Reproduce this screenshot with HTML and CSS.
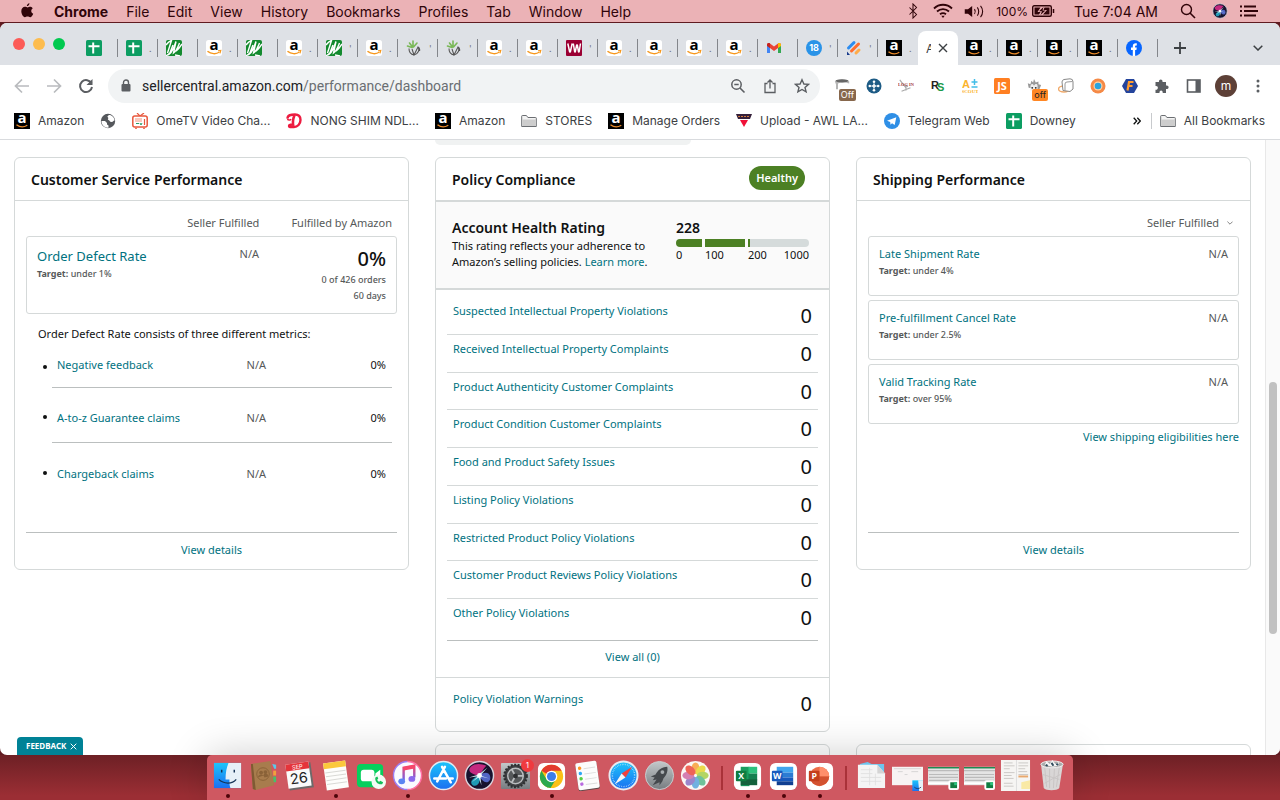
FILE: index.html
```html
<!DOCTYPE html>
<html lang="en">
<head>
    <meta charset="UTF-8">
    <meta name="viewport" content="width=device-width, initial-scale=1.0">
    <title>Account Health</title>
    <link rel="stylesheet" href="styles.css">
</head>
<body>
    <!-- Gradients shared by the dock icons -->
    <svg class="gradients" aria-hidden="true">
        <linearGradient id="g-blue" x1="0" y1="0" x2="0" y2="1"><stop offset="0" stop-color="#1cc5fb"/><stop offset="1" stop-color="#1b6ff0"/></linearGradient>
        <linearGradient id="g-note" x1="0" y1="0" x2="0" y2="1"><stop offset="0" stop-color="#f6466a"/><stop offset="1" stop-color="#6d63ee"/></linearGradient>
        <linearGradient id="g-grey" x1="0" y1="0" x2="0" y2="1"><stop offset="0" stop-color="#c3c8ca"/><stop offset="1" stop-color="#777c80"/></linearGradient>
    </svg>

    <!-- Icon sprite -->
    <svg class="sprite" aria-hidden="true">
        <symbol id="i-sheets" viewBox="0 0 16 16"><rect width="16" height="16" rx="1.5" fill="#0c9d62"/><path d="M2.5 6.2h11M7.2 2.6v11" stroke="#fff" stroke-width="2"/></symbol>
        <symbol id="i-n" viewBox="0 0 16 16"><rect width="16" height="16" rx="2" fill="#138a2e"/><path d="M0 5c2-3 3.500-4 5.500-4.500L1.500 13M7 5L3.500 14c3-2 5-8 6.500-12.500L7.500 13c3-2 4-5 6-10M10 11c2-1 4-4 6-7M0 16l4-3M9 15l5 1" stroke="#fff" stroke-width="1.400" fill="none"/></symbol>
        <symbol id="i-amz" viewBox="0 0 16 16"><rect width="16" height="16" rx="2.5" fill="#fff"/><text x="8" y="10" text-anchor="middle" class="amz-letter" fill="#000">a</text><path d="M1.5 11.2c3.500 3 8.600 3.200 12 .8" fill="none" stroke="#f7981d" stroke-width="1.500"/><path d="M12 10.800l2.800-.3-.8 2.800" fill="none" stroke="#f7981d" stroke-width="1.100"/></symbol>
        <symbol id="i-amzblk" viewBox="0 0 16 16"><rect width="16" height="16" fill="#000"/><text x="8" y="10" text-anchor="middle" class="amz-letter" fill="#fff">a</text><path d="M2.500 11.700c3.200 2.600 7.500 2.700 10.800.6" fill="none" stroke="#e8892a" stroke-width="1.300"/></symbol>
        <symbol id="i-plant" viewBox="0 0 16 16"><path d="M6.500 7L3.500 3M7 6V1M7.500 7L11 3M6 7.500L1.500 6" stroke="#79b857" stroke-width="1.600" fill="none" stroke-linecap="round"/><path d="M3 8.500c0 3.500 2 6 5 6.500M6 9l2 6 4-8c2 3 0 7-4 8M12 7c2 1 2 2 1.500 4" stroke="#555" stroke-width="1.100" fill="none"/></symbol>
        <symbol id="i-vw" viewBox="0 0 16 16"><rect width="16" height="16" rx="1" fill="#9b0033"/><path d="M1.800 3.500l1.900 8.500h.6l1.900-8.500M7.300 3.500L8.700 12h.5l1.500-7h.6l1.300 7h.5l1.400-8.500" stroke="#fff" stroke-width="1.500" stroke-linejoin="bevel" fill="none"/></symbol>
        <symbol id="i-gmail" viewBox="0 0 16 16"><path d="M1 4v9h3V7z" fill="#4285f4"/><path d="M15 4v9h-3V7z" fill="#34a853"/><path d="M1 5c0-2 2-2.500 3-1.500L8 6.600l4-3.100c1-1 3-.5 3 1.500l-3 3-4 3-4-3z" fill="#ea4335"/><path d="M12 3.500c1-1 3-.5 3 1.500v1l-3 2z" fill="#fbbc04"/><path d="M1 5c0-2 2-2.500 3-1.500V8L1 6z" fill="#c5221f"/></symbol>
        <symbol id="i-18" viewBox="0 0 16 16"><circle cx="8" cy="8" r="8" fill="#2a93e8"/><text x="8" y="11.300" text-anchor="middle" class="count-letter" fill="#fff">18</text></symbol>
        <symbol id="i-pencil" viewBox="0 0 16 16"><path d="M2.500 8l5.500-5.500" stroke="#2d8cf0" stroke-width="3" stroke-linecap="round"/><path d="M5.500 11l7-7" stroke="#ff6d2e" stroke-width="3" stroke-linecap="round"/><path d="M10 13l3-3" stroke="#ffab4a" stroke-width="3" stroke-linecap="round"/><path d="M1 11.500l3 3.500H1z" fill="#173a8c"/></symbol>
        <symbol id="i-fb" viewBox="0 0 16 16"><circle cx="8" cy="8" r="8" fill="#0866ff"/><path d="M6.800 16V10H5V7.600h1.800V6.200c0-2.300 1.200-3.200 4-2.900v2.100c-1.300-.1-1.700.1-1.700 1v1.200h1.700L10.400 10H9.100v6z" fill="#fff"/></symbol>
        <symbol id="i-globe" viewBox="0 0 16 16"><circle cx="8" cy="8" r="7.200" fill="#55585c"/><path d="M1.500 8h3.500l2 2v1.500l1.500 1v2.200C4.500 15 1.500 12 1.500 8zM9 2c-1.500 1-2 1.500-1 2.500s-1 2 .5 2.500 1 2 3 2 1.500-1.500 3-1.500C14.500 4.500 12 2 9 2z" fill="#fff"/></symbol>
        <symbol id="i-tv" viewBox="0 0 16 16"><path d="M5 0l3 3 4-3" stroke="#e8573c" stroke-width="1.200" fill="none"/><rect x=".8" y="3" width="14.400" height="11" rx="2" fill="#fff" stroke="#e8573c" stroke-width="1.500"/><path d="M3 6h7M3 8h7" stroke="#f4937f" stroke-width="1.200"/><path d="M4 10.500h3M8 10l1 2 1-2" stroke="#2a9d6a" stroke-width="1" fill="none"/><path d="M12.500 6v6" stroke="#e8573c" stroke-width="1.200"/><path d="M3 15.300h2M11 15.300h2" stroke="#e8573c"/></symbol>
        <symbol id="i-d" viewBox="0 0 16 16"><path d="M1.500 5.500C1.500 2 5 1.500 9 1.500c4.500 0 5.500 3 5.500 5.500 0 4-3 7-6.500 7-2.500 0-5 .5-5-1s3-1.500 3.500-1" fill="none" stroke="#ed1c40" stroke-width="2.400"/><path d="M8.500 2c-1.500 4-2.500 7-1 11" fill="none" stroke="#ed1c40" stroke-width="2.600"/><path d="M1.500 5.500c0 2 3 2 3.500.5" fill="none" stroke="#ed1c40" stroke-width="1.500"/></symbol>
        <symbol id="i-folder" viewBox="0 0 16 16"><path d="M.7 13.500V3.200q0-.7.700-.7h4l1.500 2h7.700q.7 0 .7.700v8.300z" fill="#f3f3f3" stroke="#6b6e72"/><path d="M1.200 6.500h13.600V13H1.200z" fill="#cdcdcd"/></symbol>
        <symbol id="i-upload" viewBox="0 0 16 16"><path d="M0 1h16l-2 5H2z" fill="#35203a"/><path d="M2 3.500h12" stroke="#d07a3c" stroke-dasharray="2 1"/><path d="M4 7h8l-4 7z" fill="#f01038"/></symbol>
        <symbol id="i-telegram" viewBox="0 0 16 16"><circle cx="8" cy="8" r="8" fill="#2f8fe6"/><path d="M3 7.800l9.300-3.600L10.700 12 8 10.200l-1.500 1.500L6.200 9z" fill="#fff"/></symbol>
        <symbol id="i-apple" viewBox="0 0 16 18"><path d="M10.800 0c.1 1.700-1.300 3.400-3 3.400C7.700 1.800 9.200.2 10.800 0zM14.500 6c-2.500 1.600-2 5 .6 6-.6 1.700-2 4-3.500 4-1.200 0-1.600-.7-3-.7s-1.900.7-3 .7C3.500 16 1.500 12.500 1.500 9.300 1.500 6 3.500 4.200 5.600 4.200c1.300 0 2.200.8 3.100.8s2-.9 3.500-.8c1 .1 1.800.6 2.300 1.800z" fill="currentColor"/></symbol>
        <symbol id="i-bluetooth" viewBox="0 0 16 18"><path d="M4 5l8 8-4 4V1l4 4-8 8" fill="none" stroke="currentColor" stroke-width="1.200"/></symbol>
        <symbol id="i-wifi" viewBox="0 0 20 16"><path d="M1 5.500c5-5 13-5 18 0M4 8.500c3.500-3.300 8.500-3.300 12 0M7 11.300c2-1.600 4-1.600 6 0" fill="none" stroke="currentColor" stroke-width="1.800"/><path d="M8.300 12.800h3.400L10 15z" fill="currentColor"/></symbol>
        <symbol id="i-volume" viewBox="0 0 21 14"><path d="M0 4.500h3.500L8 1v12L3.500 9.500H0z" fill="currentColor"/><path d="M10.500 4.500c1 1.500 1 3.500 0 5M13.500 2.500c2 2.500 2 6.500 0 9M17 1c3 3.500 3 8.500 0 12" fill="none" stroke="currentColor" stroke-width="1.200"/></symbol>
        <symbol id="i-battery" viewBox="0 0 23 12"><rect x=".7" y=".7" width="18.600" height="10.600" rx="1.500" fill="none" stroke="currentColor" stroke-width="1.400"/><path d="M2.500 2.500h6L5.500 7h3l-1.500 2.500H2.500zM12.500 2.500h5v7H11l4-4.500h-3.500z" fill="currentColor"/><path d="M11.500 2L7 6.300h3L8.500 10l5-4.500h-3z" fill="currentColor"/><path d="M21.500 4v4" stroke="currentColor" stroke-width="1.500"/></symbol>
        <symbol id="i-search" viewBox="0 0 16 16"><circle cx="6.500" cy="6.500" r="5" fill="none" stroke="currentColor" stroke-width="1.400"/><path d="M10 10l5 5" stroke="currentColor" stroke-width="1.600"/></symbol>
        <symbol id="i-siri" viewBox="0 0 32 32"><circle cx="16" cy="16" r="14.500" fill="#17132e" stroke="#d9d3dd" stroke-width="1.500"/><path d="M16 16C7 15 3 11 7 7c5-4 11-3 16-1-3 3-5 7-7 10z" fill="#c42a80"/><path d="M16 16C9 18 5 23 9 26c5 3 9-5 7-10z" fill="#1e9ab5"/><path d="M16 16c8-6 12-1 11 4-3 6-9 2-11-4z" fill="#5266c4"/><path d="M5 18l10-3 9-7-7 8 9 3-9-2 1 9-3-8-7 5 6-6z" fill="#dffaff" opacity=".85"/><circle cx="16" cy="16" r="2.500" fill="#fff"/></symbol>
        <symbol id="i-list" viewBox="0 0 18 12"><path d="M0 1.500h2M0 6h2M0 10.500h2M4 1.500h12M4 6h14M4 10.500h12" stroke="currentColor" stroke-width="2"/></symbol>
        <symbol id="i-back" viewBox="0 0 16 16"><path d="M15 8H2M8 1.500L1.500 8 8 14.500" fill="none" stroke="currentColor" stroke-width="1.700"/></symbol>
        <symbol id="i-forward" viewBox="0 0 16 16"><path d="M1 8h13M8 1.500L14.500 8 8 14.500" fill="none" stroke="currentColor" stroke-width="1.700"/></symbol>
        <symbol id="i-reload" viewBox="0 0 16 16"><path d="M13.500 5.500A6 6 0 1 0 14 9" fill="none" stroke="currentColor" stroke-width="2"/><path d="M14.500 1v6h-6z" fill="currentColor"/></symbol>
        <symbol id="i-lock" viewBox="0 0 12 14"><rect x="1.500" y="5" width="9" height="7.500" rx="1" fill="currentColor"/><path d="M3.500 6V3.500a2.500 2.500 0 0 1 5 0V6" fill="none" stroke="currentColor" stroke-width="1.400"/></symbol>
        <symbol id="i-zoomout" viewBox="0 0 16 16"><circle cx="6.500" cy="6.500" r="4.700" fill="none" stroke="currentColor" stroke-width="1.500"/><path d="M4.300 6.500h4.400M10 10l4.500 4.500" stroke="currentColor" stroke-width="1.600"/></symbol>
        <symbol id="i-share" viewBox="0 0 16 16"><path d="M5.500 5.500h-2.500v9h10v-9h-2.500M8 10.500V2M5.500 4.500L8 2l2.500 2.500" fill="none" stroke="currentColor" stroke-width="1.300"/></symbol>
        <symbol id="i-star" viewBox="0 0 16 16"><path d="M8 1.800l1.900 4.200 4.600.4-3.500 3 1.100 4.500L8 11.500l-4.100 2.400L5 9.400l-3.500-3 4.600-.4z" fill="none" stroke="currentColor" stroke-width="1.400"/></symbol>
        <symbol id="i-hat" viewBox="0 0 20 20"><path d="M1 4c3-3 15-3 18 0v3c-3-2-12-2-14 0v7H2.500V8z" fill="#b5b5b5"/><ellipse cx="10" cy="3.500" rx="8" ry="2" fill="#666"/></symbol>
        <symbol id="i-ship" viewBox="0 0 16 16"><circle cx="8" cy="8" r="7.500" fill="#1d5b85"/><path d="M5.500 8h5M8 5.500v5" stroke="#fff" stroke-width="1.500"/><g fill="#fff"><circle cx="8" cy="3.800" r="1.300"/><circle cx="8" cy="12.200" r="1.300"/><circle cx="3.800" cy="8" r="1.300"/><circle cx="12.200" cy="8" r="1.300"/></g></symbol>
        <symbol id="i-login" viewBox="0 0 18 16"><path d="M2 1l7 9M9 7l2 2M4 14l10-4M9 7v6" stroke="#aaa" stroke-width="1.300"/><text x="9" y="8.500" text-anchor="middle" class="login-letter" fill="#a63a3a">LOG IN</text></symbol>
        <symbol id="i-rs" viewBox="0 0 16 16"><text x="1" y="11" class="rs-letter" fill="#222">R</text><text x="7" y="13" class="rs-letter" fill="#1a9a4a">S</text></symbol>
        <symbol id="i-scout" viewBox="0 0 16 16"><text x="0" y="9.500" class="rs-letter" fill="#fbb42d">A</text><path d="M12.500 1v6M9.500 4h6M9.500 9h6" stroke="#42bde8" stroke-width="1.500"/><text x="8" y="15" text-anchor="middle" class="login-letter" fill="#fbb42d">SCOUT</text></symbol>
        <symbol id="i-js" viewBox="0 0 16 16"><rect width="16" height="16" rx="1.500" fill="#ff7f22"/><text x="8" y="12" text-anchor="middle" class="js-letter" fill="#fff">JS</text></symbol>
        <symbol id="i-dog" viewBox="0 0 18 18"><path d="M3 11l-1-5 3 1 1-4 2 2 1-4 2 4 3-1v3l3 1-2 5z" fill="#999"/><path d="M5 9c1-3 3-3 4 0 1-3 4-3 4 0v5H5z" fill="#eee"/><circle cx="7" cy="11" r="1" fill="#222"/><circle cx="11" cy="11" r="1" fill="#222"/></symbol>
        <symbol id="i-box" viewBox="0 0 16 16"><ellipse cx="6" cy="11" rx="5.500" ry="3" fill="none" stroke="#f1ab6c" stroke-width="1.500"/><path d="M4 4q0-2 2-2.500L12 .8q3 0 3 3V11l-3 2.500-7-1z" fill="#fff" stroke="#888"/><path d="M7 12.500V6q0-2 2-2l5.500-.5" fill="none" stroke="#999"/></symbol>
        <symbol id="i-ring" viewBox="0 0 16 16"><circle cx="8" cy="8" r="7.500" fill="#f58a47"/><circle cx="8" cy="8" r="4.500" fill="#fbd2a6"/><circle cx="8" cy="8" r="3.300" fill="#28a3df"/></symbol>
        <symbol id="i-f" viewBox="0 0 16 16"><path d="M4 1h8l4 7-4 7H4L0 8z" fill="#24449c"/><path d="M5.500 12.500L7 4h4.500M6.500 8h4" fill="none" stroke="#ff9b2e" stroke-width="2.200"/></symbol>
        <symbol id="i-puzzle" viewBox="0 0 16 16"><path d="M1.500 4H5c-.8-3.500 4.300-3.500 3.500 0H12v3.500c3.500-.8 3.500 4.300 0 3.500V15H8.700c.6-3.500-3.800-3.500-3.200 0H1.500v-3.300c3.200.4 3.200-4.400 0-3.700z" fill="currentColor"/></symbol>
        <symbol id="i-panel" viewBox="0 0 16 16"><rect x="1.500" y="2" width="12.500" height="12" fill="none" stroke="currentColor" stroke-width="1.600"/><path d="M9.500 2H14v12H9.500z" fill="currentColor"/></symbol>
        <symbol id="i-dots" viewBox="0 0 16 16"><g fill="currentColor"><circle cx="8" cy="3" r="1.500"/><circle cx="8" cy="8" r="1.500"/><circle cx="8" cy="13" r="1.500"/></g></symbol>
        <symbol id="i-close" viewBox="0 0 10 10"><path d="M1 1l8 8M9 1L1 9" stroke="currentColor" stroke-width="1.400"/></symbol>
        <symbol id="i-plus" viewBox="0 0 12 12"><path d="M6 0v12M0 6h12" stroke="currentColor" stroke-width="1.800"/></symbol>
        <symbol id="i-chevron" viewBox="0 0 10 6"><path d="M.7.7L5 5 9.300.7" fill="none" stroke="currentColor" stroke-width="1.500"/></symbol>
        <symbol id="i-more" viewBox="0 0 8 8"><path d="M.7.700L3.700 4 .7 7.300M4.300.700L7.300 4l-3 3.300" fill="none" stroke="currentColor" stroke-width="1.300"/></symbol>

        <!-- Dock icons -->
        <symbol id="d-finder" viewBox="0 0 32 32"><rect x="2" y="3" width="28" height="26" fill="url(#g-blue)"/><path d="M17 3h13v26H19c-1-3-1-6-1-9h-4c0-7 1-12 3-17z" fill="#e6f0f8"/><path d="M10 10v3M23 10v3" stroke="#163356" stroke-width="1.500"/><path d="M7 20c5 5 14 5 18 0" fill="none" stroke="#163356" stroke-width="1.300"/></symbol>
        <symbol id="d-contacts" viewBox="0 0 32 32"><path d="M25 4l4 1 0 4h-2z" fill="#5bc8ea"/><path d="M26 11h3v5h-3z" fill="#f2a03d"/><path d="M26 17h3v6h-3z" fill="#49bf6a"/><path d="M3 4l20-3 4 25-19 5-3-1z" fill="#a87c4d"/><path d="M3 4l2 26 3 1L5 4z" fill="#7f5a33"/><circle cx="15.500" cy="14.500" r="6.500" fill="none" stroke="#8a6238"/><circle cx="13.500" cy="13" r="2" fill="#8a6238"/><circle cx="18" cy="12.500" r="2" fill="#8a6238"/><path d="M10 18c1-4 6-4 7 0l4-1c0-4-5-4-5-1z" fill="#8a6238"/></symbol>
        <symbol id="d-calendar" viewBox="0 0 32 32"><g transform="rotate(-8 16 16)"><rect x="4" y="4" width="25" height="26" fill="#6d6a6a"/><rect x="3" y="3" width="24" height="25" fill="#fafafa"/><rect x="3" y="3" width="24" height="7" fill="#e5343a"/><text x="15" y="9" text-anchor="middle" class="cal-month" fill="#fff">SEP</text><text x="15" y="24" text-anchor="middle" class="cal-day" fill="#222">26</text></g></symbol>
        <symbol id="d-notes" viewBox="0 0 32 32"><g transform="rotate(-8 16 16)"><rect x="5" y="2" width="23" height="28" fill="#fdfdfb"/><rect x="5" y="2" width="23" height="6" fill="#fbc83c"/><path d="M6 12h21M6 16h21M6 20h21M6 24h21" stroke="#d9d9d5"/></g></symbol>
        <symbol id="d-facetime" viewBox="0 0 32 32"><rect x="1" y="4" width="27" height="24" rx="4" fill="#06cf5d"/><rect x="5" y="10" width="14" height="12" rx="3" fill="#fff"/><path d="M20 14l5-4v10l-5-3z" fill="#fff"/><circle cx="23.500" cy="22.500" r="7.500" fill="#f3fbf5"/><path d="M20 18c-1 4 3 8 7 7l1-2-3-1.500-1 1c-1-.5-2-1.500-2-2.500l1-1-1-2z" fill="#14bf58"/></symbol>
        <symbol id="d-music" viewBox="0 0 32 32"><circle cx="16" cy="16" r="14.500" fill="#fafaff"/><path d="M16 1.500A14.500 14.500 0 0 0 16 30.500" stroke="#9d7cf0" stroke-width="1.500" fill="none"/><path d="M16 1.500A14.500 14.500 0 0 1 16 30.500" stroke="#ff6fa2" stroke-width="1.500" fill="none"/><path d="M12 21V8l11-2v12" fill="none" stroke="url(#g-note)" stroke-width="2.500"/><path d="M12 9l11-2" stroke="#f6466a" stroke-width="3.500"/><ellipse cx="10" cy="22" rx="3.500" ry="3" fill="#5b85f2"/><ellipse cx="20.500" cy="19.500" rx="3.500" ry="3" fill="#8a68ec"/></symbol>
        <symbol id="d-appstore" viewBox="0 0 32 32"><circle cx="16" cy="16" r="14.500" fill="url(#g-blue)" stroke="#e3ebf2" stroke-width="1.500"/><path d="M17.500 7L9.500 22M14.500 7l9 16M6.500 19h12M21.500 19h4" stroke="#fff" stroke-width="2.600" stroke-linecap="round"/></symbol>
        <symbol id="d-settings" viewBox="0 0 32 32"><rect x="1" y="3" width="30" height="27" rx="1" fill="url(#g-grey)"/><circle cx="16" cy="16.500" r="11.500" fill="#3d3f42" stroke="#2e3032" stroke-width="2.500" stroke-dasharray="2 1.500"/><circle cx="16" cy="16.500" r="8" fill="#55585a" stroke="#b9bcbe" stroke-width="1.500"/><path d="M16 16.500h8M16 16.500l-4-7M16 16.500l-4 7" stroke="#b9bcbe" stroke-width="1.800"/><circle cx="16" cy="16.500" r="2.500" fill="#2e3032"/></symbol>
        <symbol id="d-chrome" viewBox="0 0 32 32"><rect x="2" y="3" width="28" height="28" rx="6" fill="#fff"/><circle cx="16" cy="17" r="12" fill="#fbc116"/><path d="M16 17L5.600 11A12 12 0 0 1 26.400 11H16z" fill="#e33b2e"/><path d="M5.600 11L11 20l5 3-4 5.300A12 12 0 0 1 5.600 11z" fill="#2da94f"/><path d="M15 29l6-10-6 4-3.500 5z" fill="#2da94f"/><circle cx="16" cy="17" r="6" fill="#fff"/><circle cx="16" cy="17" r="4.700" fill="#3c7de8"/></symbol>
        <symbol id="d-reminders" viewBox="0 0 32 32"><g transform="rotate(-8 16 16)"><rect x="5" y="3" width="22" height="28" rx="2" fill="#5a4848"/><rect x="5" y="2" width="22" height="28" rx="2" fill="#fcfcfc"/><circle cx="9" cy="7.500" r="1.800" fill="#ff9527"/><circle cx="9" cy="13" r="1.800" fill="#2da8f5"/><circle cx="9" cy="18.500" r="1.800" fill="#56cf45"/><circle cx="9" cy="24" r="1.800" fill="#b96be0"/><path d="M13 8.500h12M13 14h12M13 19.500h12M13 25h12" stroke="#ddd"/></g></symbol>
        <symbol id="d-safari" viewBox="0 0 32 32"><circle cx="16" cy="16" r="14.500" fill="url(#g-blue)" stroke="#e8eaf0" stroke-width="2"/><circle cx="16" cy="16" r="11.500" fill="none" stroke="#bfe3fb" stroke-width="1.500" stroke-dasharray=".6 1.200"/><path d="M25 7l-7 11-4-4z" fill="#f2403c"/><path d="M7 25l7-11 4 4z" fill="#f6f6f6"/></symbol>
        <symbol id="d-launchpad" viewBox="0 0 32 32"><circle cx="16" cy="16" r="14.500" fill="url(#g-grey)" stroke="#c9cdd0"/><path d="M24 7c-6 0-10 4-12 8l-5 2 4 1-2 3 4-1-4 6 7-3 0 3 3-4 1-3c3-3 5-7 4-12z" fill="#45494d"/><circle cx="19" cy="12.500" r="2" fill="#a9aeb1"/></symbol>
        <symbol id="d-photos" viewBox="0 0 32 32"><circle cx="16" cy="16" r="15" fill="#fbf8f5"/><g opacity=".85"><ellipse cx="16" cy="8.500" rx="4" ry="6" fill="#f9a13a"/><ellipse cx="16" cy="8.500" rx="4" ry="6" fill="#e8d52e" transform="rotate(45 16 16)"/><ellipse cx="16" cy="8.500" rx="4" ry="6" fill="#a7d04a" transform="rotate(90 16 16)"/><ellipse cx="16" cy="8.500" rx="4" ry="6" fill="#57b98b" transform="rotate(135 16 16)"/><ellipse cx="16" cy="8.500" rx="4" ry="6" fill="#5aa5dd" transform="rotate(180 16 16)"/><ellipse cx="16" cy="8.500" rx="4" ry="6" fill="#8b72c4" transform="rotate(225 16 16)"/><ellipse cx="16" cy="8.500" rx="4" ry="6" fill="#cf6aa6" transform="rotate(270 16 16)"/><ellipse cx="16" cy="8.500" rx="4" ry="6" fill="#ee4a3c" transform="rotate(315 16 16)"/></g></symbol>
        <symbol id="d-excel" viewBox="0 0 32 32"><rect x="2" y="3" width="28" height="28" rx="6" fill="#fff"/><path d="M9 7h9v20H9z" fill="#1a9d5f"/><path d="M17 7h9v7h-9z" fill="#2ec27e"/><path d="M17 14h9v7h-9z" fill="#138050"/><path d="M9 20h17v6H9z" fill="#14613c"/><rect x="4" y="11" width="11" height="11" rx="1" fill="#107c41"/><text x="9.500" y="20" text-anchor="middle" class="office-letter" fill="#fff">X</text></symbol>
        <symbol id="d-word" viewBox="0 0 32 32"><rect x="2" y="3" width="28" height="28" rx="6" fill="#fff"/><path d="M9 7h17v6H9z" fill="#41a5ee"/><path d="M9 13h17v5H9z" fill="#2b7cd3"/><path d="M9 18h17v4H9z" fill="#185abd"/><path d="M9 22h17v4H9z" fill="#103f91"/><rect x="4" y="11" width="11" height="11" rx="1" fill="#185abd"/><text x="9.500" y="20" text-anchor="middle" class="office-letter" fill="#fff">W</text></symbol>
        <symbol id="d-ppt" viewBox="0 0 32 32"><rect x="2" y="3" width="28" height="28" rx="6" fill="#fff"/><circle cx="16" cy="17" r="10" fill="#ed6c47"/><path d="M16 7a10 10 0 0 1 10 10H16z" fill="#ff8f6b"/><path d="M26 17a10 10 0 0 1-19 4l9-4z" fill="#d35230"/><rect x="5" y="11" width="11" height="11" rx="1" fill="#c43e1c"/><text x="10.500" y="20" text-anchor="middle" class="office-letter" fill="#fff">P</text></symbol>
        <symbol id="d-stack" viewBox="0 0 32 32"><path d="M4 4l8-2 4 2h13v14H4z" fill="#6cc5ee"/><path d="M2 5h20l8 9v15H2z" fill="#f4f4f4"/><path d="M22 5v9h8z" fill="#d4d4d4"/><path d="M5 10h12M5 14h12M5 18h21M5 22h21M14 8v18M20 14v12" stroke="#ddd" stroke-width=".8"/></symbol>
        <symbol id="d-window" viewBox="0 0 32 32"><rect y="7" width="32" height="19" fill="#f7f3f3"/><path d="M2 9h28M6 12h5M20 12h7M13 15h3" stroke="#ccc" stroke-width=".8"/><rect x="21" y="21" width="11" height="11" fill="url(#g-blue)"/><path d="M27 21h5v11h-4z" fill="#e6f0f8"/><path d="M23 28c2 2 5 2 7 0" fill="none" stroke="#163356" stroke-width=".8"/></symbol>
        <symbol id="d-sheetwin" viewBox="0 0 32 32"><rect y="7" width="32" height="19" fill="#e4e4e4"/><path d="M0 8h32" stroke="#1f8a52" stroke-width="1.500"/><path d="M0 11h32M1 15h30M1 18h30M1 21h30" stroke="#bbb" stroke-width="1.200"/><path d="M0 24h32" stroke="#fff" stroke-width="2"/><rect x="21" y="21" width="11" height="10" rx="2" fill="#fff"/><path d="M23 23h7v6h-7z" fill="#107c41"/><path d="M27 23h3v3h-3z" fill="#2ec27e"/></symbol>
        <symbol id="d-docwin" viewBox="0 0 32 32"><rect x="1" width="30" height="32" fill="#f6f5f3"/><path d="M4 3h9M4 6h11M4 9h6M4 13h11M4 16h8M4 19h10M4 24h9M4 27h10M19 3h10M19 6h10M19 9h7M19 12h9M19 15h10" stroke="#cbc8c5"/><path d="M17 0v32" stroke="#ddd"/><path d="M19 17h10" stroke="#e9a86d" stroke-width="2"/><path d="M22 23l9-2v9h-9z" fill="#f9e9a5"/></symbol>
        <symbol id="d-trash" viewBox="0 0 32 32"><path d="M5 3l3 26c2 3 14 3 16 0l4-26z" fill="#d9d6d6"/><path d="M9 8l2 20M14 9l0 20M19 9l-1 20M24 8l-3 20M7 15l17 5M9 24l16-9" stroke="#c8c4c4" fill="none"/><ellipse cx="16.500" cy="4.500" rx="11.500" ry="3.500" fill="#aaa" stroke="#eee"/><path d="M9 5l2-4 3 3 3-4 3 4 4-2-1 4-6 1z" fill="#f6f6f6"/><path d="M10 5l2 1M16 3l2 3M21 4l2 1" stroke="#314c5c" stroke-width="2"/></symbol>
    </svg>

    <!-- System menu bar -->
    <header class="menubar">
        <nav class="menubar-left">
            <svg class="apple"><use href="#i-apple"/></svg>
            <strong>Chrome</strong>
            <span>File</span>
            <span>Edit</span>
            <span>View</span>
            <span>History</span>
            <span>Bookmarks</span>
            <span>Profiles</span>
            <span>Tab</span>
            <span>Window</span>
            <span>Help</span>
        </nav>
        <div class="menubar-right">
            <svg class="mb-bt"><use href="#i-bluetooth"/></svg>
            <svg class="mb-wifi"><use href="#i-wifi"/></svg>
            <svg class="mb-vol"><use href="#i-volume"/></svg>
            <span class="battery">100% <svg class="mb-bat"><use href="#i-battery"/></svg></span>
            <span class="clock">Tue 7:04 AM</span>
            <svg class="mb-icon"><use href="#i-search"/></svg>
            <svg class="mb-icon"><use href="#i-siri"/></svg>
            <svg class="mb-list"><use href="#i-list"/></svg>
        </div>
    </header>

    <div class="window">
        <div class="tabstrip">
            <div class="lights"><i class="red"></i><i class="yellow"></i><i class="green"></i></div>
            <div class="tabs">
                <div class="tab"><svg><use href="#i-sheets"/></svg></div>
                <div class="tab"><svg><use href="#i-sheets"/></svg><span>.</span></div>
                <div class="tab"><svg><use href="#i-n"/></svg></div>
                <div class="tab"><svg><use href="#i-amz"/></svg><span>.</span></div>
                <div class="tab"><svg><use href="#i-n"/></svg></div>
                <div class="tab"><svg><use href="#i-amz"/></svg><span>.</span></div>
                <div class="tab"><svg><use href="#i-n"/></svg><span>'</span></div>
                <div class="tab"><svg><use href="#i-amz"/></svg><span>.</span></div>
                <div class="tab"><svg><use href="#i-plant"/></svg><span>'</span></div>
                <div class="tab"><svg><use href="#i-plant"/></svg><span>'</span></div>
                <div class="tab"><svg><use href="#i-amz"/></svg><span>.</span></div>
                <div class="tab"><svg><use href="#i-amz"/></svg><span>.</span></div>
                <div class="tab"><svg><use href="#i-vw"/></svg><span>'</span></div>
                <div class="tab"><svg><use href="#i-amz"/></svg><span>.</span></div>
                <div class="tab"><svg><use href="#i-amz"/></svg><span>.</span></div>
                <div class="tab"><svg><use href="#i-amz"/></svg><span>.</span></div>
                <div class="tab"><svg><use href="#i-amz"/></svg><span>.</span></div>
                <div class="tab"><svg><use href="#i-gmail"/></svg></div>
                <div class="tab"><svg><use href="#i-18"/></svg><span>'</span></div>
                <div class="tab"><svg><use href="#i-pencil"/></svg><span>'</span></div>
                <div class="tab no-line"><svg><use href="#i-amzblk"/></svg><span>.</span></div>
                <div class="tab active"><span class="tab-title">A</span><button class="tab-close" aria-label="Close tab"><svg><use href="#i-close"/></svg></button></div>
                <div class="tab"><svg><use href="#i-amzblk"/></svg><span>.</span></div>
                <div class="tab"><svg><use href="#i-amzblk"/></svg><span>.</span></div>
                <div class="tab"><svg><use href="#i-amzblk"/></svg><span>.</span></div>
                <div class="tab"><svg><use href="#i-amzblk"/></svg><span>.</span></div>
                <div class="tab"><svg><use href="#i-fb"/></svg></div>
            </div>
            <button class="new-tab" aria-label="New tab"><svg><use href="#i-plus"/></svg></button>
            <button class="tab-search" aria-label="Search tabs"><svg><use href="#i-chevron"/></svg></button>
        </div>

        <div class="toolbar">
            <button class="tool dim" aria-label="Back"><svg><use href="#i-back"/></svg></button>
            <button class="tool dim" aria-label="Forward"><svg><use href="#i-forward"/></svg></button>
            <button class="tool" aria-label="Reload"><svg><use href="#i-reload"/></svg></button>
            <div class="omnibox">
                <svg class="lock"><use href="#i-lock"/></svg>
                <span class="url">sellercentral.amazon.com<em>/performance/dashboard</em></span>
                <button class="tool" aria-label="Zoom"><svg><use href="#i-zoomout"/></svg></button>
                <button class="tool" aria-label="Share"><svg><use href="#i-share"/></svg></button>
                <button class="tool" aria-label="Bookmark"><svg><use href="#i-star"/></svg></button>
            </div>
            <button class="tool" aria-label="Extension off"><svg><use href="#i-hat"/></svg><span class="ext-badge brown">Off</span></button>
            <button class="tool" aria-label="Shipping"><svg><use href="#i-ship"/></svg></button>
            <button class="tool"><svg><use href="#i-login"/></svg></button>
            <button class="tool"><svg><use href="#i-rs"/></svg></button>
            <button class="tool"><svg><use href="#i-scout"/></svg></button>
            <button class="tool"><svg><use href="#i-js"/></svg></button>
            <button class="tool"><svg><use href="#i-dog"/></svg><span class="ext-badge orange">off</span></button>
            <button class="tool" aria-label="Box"><svg><use href="#i-box"/></svg></button>
            <button class="tool" aria-label="Ring"><svg><use href="#i-ring"/></svg></button>
            <button class="tool" aria-label="F"><svg><use href="#i-f"/></svg></button>
            <button class="tool" aria-label="Extensions"><svg><use href="#i-puzzle"/></svg></button>
            <button class="tool" aria-label="Side panel"><svg><use href="#i-panel"/></svg></button>
            <button class="tool"><span class="avatar">m</span></button>
            <button class="tool" aria-label="Menu"><svg><use href="#i-dots"/></svg></button>
        </div>

        <nav class="bookmarks">
            <a href="#"><svg><use href="#i-amzblk"/></svg>Amazon</a>
            <a href="#" aria-label="Site"><svg><use href="#i-globe"/></svg></a>
            <a href="#"><svg><use href="#i-tv"/></svg>OmeTV Video Cha...</a>
            <a href="#"><svg><use href="#i-d"/></svg>NONG SHIM NDL...</a>
            <a href="#"><svg><use href="#i-amzblk"/></svg>Amazon</a>
            <a href="#"><svg><use href="#i-folder"/></svg>STORES</a>
            <a href="#"><svg><use href="#i-amzblk"/></svg>Manage Orders</a>
            <a href="#"><svg><use href="#i-upload"/></svg>Upload - AWL LA...</a>
            <a href="#"><svg><use href="#i-telegram"/></svg>Telegram Web</a>
            <a href="#"><svg><use href="#i-sheets"/></svg>Downey</a>
            <button class="more" aria-label="More bookmarks"><svg><use href="#i-more"/></svg></button>
            <a href="#" class="all"><svg><use href="#i-folder"/></svg>All Bookmarks</a>
        </nav>

        <div class="viewport">
            <main class="page">
                <div class="strip"></div>
                <div class="cards">
                    <section class="card service">
                        <h2 class="card-head">Customer Service Performance</h2>
                        <div class="columns-head">
                            <span>Seller Fulfilled</span>
                            <span>Fulfilled by Amazon</span>
                        </div>
                        <div class="box odr">
                            <div>
                                <a href="#" class="big-link">Order Defect Rate</a>
                                <p class="target"><b>Target:</b> under 1%</p>
                            </div>
                            <span class="na">N/A</span>
                            <div class="odr-value">
                                <strong>0%</strong>
                                <span>0 of 426 orders</span>
                                <span>60 days</span>
                            </div>
                        </div>
                        <p class="intro">Order Defect Rate consists of three different metrics:</p>
                        <ul class="metrics">
                            <li><a href="#">Negative feedback</a><span class="na">N/A</span><span>0%</span></li>
                            <li><a href="#">A-to-z Guarantee claims</a><span class="na">N/A</span><span>0%</span></li>
                            <li><a href="#">Chargeback claims</a><span class="na">N/A</span><span>0%</span></li>
                        </ul>
                        <div class="card-foot"><a href="#">View details</a></div>
                    </section>

                    <section class="card policy">
                        <div class="card-head">
                            <h2>Policy Compliance</h2>
                            <span class="healthy">Healthy</span>
                        </div>
                        <div class="rating">
                            <div>
                                <h3>Account Health Rating</h3>
                                <p>This rating reflects your adherence to Amazon’s selling policies. <a href="#">Learn more</a>.</p>
                            </div>
                            <div class="gauge">
                                <h3>228</h3>
                                <div class="bar"><i class="low"></i><i class="mid"></i><i class="high"></i></div>
                                <div class="scale"><span>0</span><span>100</span><span>200</span><span>1000</span></div>
                            </div>
                        </div>
                        <ul class="violations">
                            <li><a href="#">Suspected Intellectual Property Violations</a><span>0</span></li>
                            <li><a href="#">Received Intellectual Property Complaints</a><span>0</span></li>
                            <li><a href="#">Product Authenticity Customer Complaints</a><span>0</span></li>
                            <li><a href="#">Product Condition Customer Complaints</a><span>0</span></li>
                            <li><a href="#">Food and Product Safety Issues</a><span>0</span></li>
                            <li><a href="#">Listing Policy Violations</a><span>0</span></li>
                            <li><a href="#">Restricted Product Policy Violations</a><span>0</span></li>
                            <li><a href="#">Customer Product Reviews Policy Violations</a><span>0</span></li>
                            <li><a href="#">Other Policy Violations</a><span>0</span></li>
                        </ul>
                        <div class="view-all"><a href="#">View all (0)</a></div>
                        <div class="warnings"><a href="#">Policy Violation Warnings</a><span>0</span></div>
                    </section>

                    <section class="card shipping">
                        <h2 class="card-head">Shipping Performance</h2>
                        <div class="filter">
                            <select aria-label="Fulfillment">
                                <option>Seller Fulfilled</option>
                            </select>
                            <svg><use href="#i-chevron"/></svg>
                        </div>
                        <div class="box rate">
                            <div><a href="#">Late Shipment Rate</a><p class="target"><b>Target:</b> under 4%</p></div>
                            <span class="na">N/A</span>
                        </div>
                        <div class="box rate">
                            <div><a href="#">Pre-fulfillment Cancel Rate</a><p class="target"><b>Target:</b> under 2.5%</p></div>
                            <span class="na">N/A</span>
                        </div>
                        <div class="box rate">
                            <div><a href="#">Valid Tracking Rate</a><p class="target"><b>Target:</b> over 95%</p></div>
                            <span class="na">N/A</span>
                        </div>
                        <a href="#" class="eligibility">View shipping eligibilities here</a>
                        <div class="card-foot"><a href="#">View details</a></div>
                    </section>

                    <section class="card next second"></section>
                    <section class="card next"></section>
                </div>
                <button class="feedback">FEEDBACK <svg><use href="#i-close"/></svg></button>
            </main>
            <div class="scrollbar"><i class="thumb"></i></div>
        </div>
    </div>

    <footer class="desktop">
        <div class="dock">
            <div class="app running"><svg><use href="#d-finder"/></svg></div>
            <div class="app"><svg><use href="#d-contacts"/></svg></div>
            <div class="app"><svg><use href="#d-calendar"/></svg></div>
            <div class="app running"><svg><use href="#d-notes"/></svg></div>
            <div class="app"><svg><use href="#d-facetime"/></svg></div>
            <div class="app running"><svg><use href="#d-music"/></svg></div>
            <div class="app"><svg><use href="#d-appstore"/></svg></div>
            <div class="app"><svg><use href="#i-siri"/></svg></div>
            <div class="app"><svg><use href="#d-settings"/></svg><span class="app-badge">1</span></div>
            <div class="app running"><svg><use href="#d-chrome"/></svg></div>
            <div class="app"><svg><use href="#d-reminders"/></svg></div>
            <div class="app"><svg><use href="#d-safari"/></svg></div>
            <div class="app"><svg><use href="#d-launchpad"/></svg></div>
            <div class="app"><svg><use href="#d-photos"/></svg></div>
            <div class="divider"></div>
            <div class="app running"><svg><use href="#d-excel"/></svg></div>
            <div class="app running"><svg><use href="#d-word"/></svg></div>
            <div class="app running"><svg><use href="#d-ppt"/></svg></div>
            <div class="divider"></div>
            <div class="app"><svg><use href="#d-stack"/></svg></div>
            <div class="app"><svg><use href="#d-window"/></svg></div>
            <div class="app"><svg><use href="#d-sheetwin"/></svg></div>
            <div class="app"><svg><use href="#d-sheetwin"/></svg></div>
            <div class="app"><svg><use href="#d-docwin"/></svg></div>
            <div class="app"><svg><use href="#d-trash"/></svg></div>
        </div>
    </footer>
</body>
</html>
```
FILE: styles.css
```css
/* Global styles */
* {
    box-sizing: border-box;
}

body {
    margin: 0;
    height: 100vh;
    display: flex;
    flex-direction: column;
    overflow: hidden;
    background-color: #5f1a20;
    font-family: Inter, Roboto, sans-serif;
    color: #0f1111;
}

button {
    border: 0;
    padding: 0;
    background: none;
    color: inherit;
    font: inherit;
}

a {
    color: #00727f;
    text-decoration: none;
}

h2, h3, p, ul {
    margin: 0;
    padding: 0;
}

svg {
    display: block;
    flex-shrink: 0;
}

.gradients {
    position: absolute;
    width: 0;
    height: 0;
}

.sprite {
    display: none;
}

/* Lettering inside icons */
.amz-letter { font: bold 15px "Open Sans", sans-serif; }
.count-letter { font: bold 9px Inter, sans-serif; }
.login-letter { font: bold 5px "Liberation Serif", serif; }
.rs-letter { font: bold 11px "Liberation Sans", sans-serif; }
.js-letter { font: bold 11px "Open Sans", sans-serif; }
.cal-month { font: 6px Inter, sans-serif; }
.cal-day { font: 15px Inter, sans-serif; }
.office-letter { font: bold 9px "Open Sans", sans-serif; }

/* Menu bar */
.menubar {
    display: flex;
    justify-content: space-between;
    align-items: center;
    height: 23px;
    padding: 0 22px 0 20px;
    background-color: #ebb2b6;
    border-bottom: 1px solid #5f1a20;
    color: #300409;
    font-size: 14px;
}

.menubar-left,
.menubar-right {
    display: flex;
    align-items: center;
}

.menubar-left {
    gap: 18px;
}

.menubar-right {
    gap: 16px;
}

.apple {
    width: 14px;
    height: 16px;
    margin-right: 2px;
}

.mb-bt { width: 14px; height: 16px; }
.mb-wifi { width: 20px; height: 16px; margin-left: -3px; }
.mb-vol { width: 21px; height: 13px; margin-left: -5px; }
.mb-bat { width: 23px; height: 12px; }
.mb-icon { width: 16px; height: 16px; }
.mb-list { width: 18px; height: 12px; margin-left: -4px; }

.battery {
    display: flex;
    align-items: center;
    gap: 4px;
    font-size: 12px;
    margin-left: -5px;
}

.clock {
    margin: 0 6px 0 3px;
}

/* Browser window */
.window {
    flex: 1;
    min-height: 0;
    display: flex;
    flex-direction: column;
    border-radius: 7px;
    overflow: hidden;
    background-color: #fff;
}

.tabstrip {
    display: flex;
    align-items: flex-end;
    height: 42px;
    padding-left: 13px;
    background-color: #dee1e6;
    color: #3c4043;
}

.lights {
    display: flex;
    gap: 8px;
    width: 65px;
    padding-bottom: 15px;
}

.lights i {
    width: 12px;
    height: 12px;
    border-radius: 50%;
}

.lights .red { background-color: #fc5b57; }
.lights .yellow { background-color: #fdbc4e; }
.lights .green { background-color: #00c94f; }

.tabs {
    display: flex;
}

.tab {
    position: relative;
    display: flex;
    align-items: center;
    gap: 7px;
    width: 40px;
    height: 34px;
    padding-left: 8px;
    font-size: 9px;
    color: #72757a;
}

.tab svg {
    width: 16px;
    height: 16px;
}

.tab::after {
    content: "";
    position: absolute;
    right: 0;
    top: 8px;
    width: 1px;
    height: 18px;
    background-color: #83868b;
}

.tab.active::after,
.tab.no-line::after {
    display: none;
}

.tab.active {
    background-color: #fff;
    border-radius: 8px 8px 0 0;
    font-size: 12px;
    color: #3c4043;
}

.tab-title {
    width: 5px;
    overflow: hidden;
}

.tab-close svg {
    width: 10px;
    height: 10px;
}

.new-tab {
    height: 34px;
    padding: 0 16px;
}

.new-tab svg {
    width: 12px;
    height: 12px;
}

.tab-search {
    height: 34px;
    margin-left: auto;
    padding: 0 17px;
}

.tab-search svg {
    width: 10px;
    height: 6px;
}

/* Toolbar */
.toolbar {
    display: flex;
    align-items: center;
    height: 42px;
    padding: 0 6px;
    color: #5b5e62;
}

.tool {
    position: relative;
    display: flex;
    justify-content: center;
    align-items: center;
    width: 32px;
    height: 32px;
}

.tool svg {
    width: 16px;
    height: 16px;
}

.tool.dim {
    color: #b9bbbe;
}

.omnibox {
    flex: 1;
    display: flex;
    align-items: center;
    height: 34px;
    margin: 0 6px 0 6px;
    padding: 0 2px 0 12px;
    border-radius: 17px;
    background-color: #f1f3f4;
}

.lock {
    width: 12px;
    height: 14px;
    margin-right: 10px;
}

.url {
    flex: 1;
    font-family: Roboto, sans-serif;
    font-size: 14px;
    color: #202124;
}

.url em {
    font-style: normal;
    color: #6a6e72;
}

.ext-badge {
    position: absolute;
    right: 2px;
    bottom: 1px;
    padding: 0 2px;
    border-radius: 2px;
    font-size: 9px;
    line-height: 12px;
}

.ext-badge.brown { background-color: #87674c; color: #fff; }
.ext-badge.orange { background-color: #ff8724; color: #222; }

.avatar {
    width: 22px;
    height: 22px;
    border-radius: 50%;
    background-color: #5d4037;
    color: #fff;
    font-size: 12px;
    line-height: 21px;
}

/* Bookmarks bar */
.bookmarks {
    display: flex;
    align-items: center;
    gap: 16px;
    height: 33px;
    padding: 0 15px 5px 14px;
    border-bottom: 1px solid #d9dbde;
    font-size: 12px;
    white-space: nowrap;
}

.bookmarks a {
    display: flex;
    align-items: center;
    gap: 8px;
    color: #3c4043;
}

.bookmarks a svg {
    width: 16px;
    height: 16px;
}

.bookmarks .more {
    margin-left: auto;
    margin-right: -6px;
}

.more svg {
    width: 8px;
    height: 8px;
}

.bookmarks .all {
    padding-left: 8px;
    border-left: 1px solid #c8cacd;
}

/* Page */
.viewport {
    flex: 1;
    min-height: 0;
    display: flex;
}

.page {
    position: relative;
    flex: 1;
    padding: 0 14px;
    overflow: hidden;
    font-family: "Noto Sans", "Open Sans", sans-serif;
    font-size: 11px;
    line-height: 16px;
}

.strip {
    width: 256px;
    height: 5px;
    margin: 0 0 12px 421px;
    border-radius: 0 0 5px 5px;
    background-color: #f0f2f2;
}

.cards {
    display: grid;
    grid-template-columns: repeat(3, 1fr);
    align-items: start;
    gap: 12px 26px;
}

.card {
    display: flex;
    flex-direction: column;
    border: 1px solid #d5d9d9;
    border-radius: 6px;
}

.service,
.shipping {
    min-height: 413px;
}

.card-head {
    display: flex;
    justify-content: space-between;
    align-items: center;
    height: 43px;
    padding: 2px 16px 0;
    border-bottom: 1px solid #d5d9d9;
    font-size: 14px;
    font-weight: 600;
}

.card-head h2,
.rating h3 {
    font-size: 14px;
    font-weight: 600;
}

.columns-head {
    display: flex;
    justify-content: flex-end;
    gap: 32px;
    padding: 14px 16px 5px 0;
    color: #565959;
}

.box {
    display: flex;
    margin: 0 11px;
    padding: 9px 10px;
    border: 1px solid #d5d9d9;
    border-radius: 3px;
}

.na {
    color: #565959;
}

.target {
    color: #565959;
    font-size: 9px;
    font-weight: 500;
}

.odr {
    height: 78px;
}

.odr > div:first-child {
    flex: 1;
}

.big-link {
    display: block;
    font-size: 13px;
    line-height: 20px;
}

.odr-value {
    display: flex;
    flex-direction: column;
    width: 127px;
    text-align: right;
    font-size: 9px;
    font-weight: 500;
    color: #565959;
}

.odr-value strong {
    font-size: 20px;
    font-weight: 500;
    line-height: 26px;
    color: #0f1111;
}

.intro {
    padding: 12px 23px 0;
}

.metrics {
    margin: 0 16px 0 37px;
    list-style: none;
}

.metrics li {
    display: grid;
    grid-template-columns: 1fr 40px 120px;
    align-items: center;
    height: 55px;
    padding: 6px 6px 0 5px;
    position: relative;
    border-bottom: 1px solid #bbbfbf;
}

.metrics li:last-child {
    border-bottom: 0;
}

.metrics li:first-child {
    height: 46px;
    padding-top: 0;
}

.metrics li::before {
    content: "";
    position: absolute;
    left: -9px;
    top: 50%;
    width: 4px;
    height: 4px;
    border-radius: 50%;
    background-color: #0f1111;
}

.metrics span {
    text-align: right;
}

.card-foot {
    margin: auto 11px 0;
    padding: 9px 0 11px;
    border-top: 1px solid #bbbfbf;
    text-align: center;
}

/* Policy compliance */
.policy .card-head {
    height: 44px;
    padding-right: 24px;
    border-bottom-width: 2px;
}

.healthy {
    margin-bottom: 4px;
    padding: 0 7px;
    border-radius: 12px;
    background-color: #4c8024;
    color: #fff;
    font-size: 11px;
    line-height: 24px;
}

.rating {
    display: flex;
    justify-content: space-between;
    height: 88px;
    padding: 16px 20px 0 16px;
    background-color: #fafafa;
    border-bottom: 2px solid #d5d9d9;
}

.rating h3 {
    line-height: 20px;
}

.gauge {
    flex-shrink: 0;
    width: 133px;
}

.bar {
    display: flex;
    gap: 3px;
    height: 8px;
    margin: 1px 0 0;
    border-radius: 4px;
    overflow: hidden;
}

.bar .low { width: 26px; background-color: #4c8024; }
.bar .mid { width: 40px; background-color: #4c8024; }
.bar .high { flex: 1; border-left: 2px solid #4c8024; background-color: #d5dbdb; }

.scale {
    display: flex;
}

.scale span:nth-child(1) { width: 29px; }
.scale span:nth-child(2) { width: 43px; }
.scale span:last-child { margin-left: auto; }

.violations {
    display: flex;
    flex-direction: column;
    height: 344px;
    margin: 7px 11px 0;
    list-style: none;
}

.violations li {
    flex: 1;
    display: flex;
    justify-content: space-between;
    padding: 6px 6px 0;
    border-bottom: 1px solid #d5d9d9;
}

.violations li:last-child {
    flex: 0 0 42px;
    border-color: #bbbfbf;
}

.violations span,
.warnings span {
    font-size: 20px;
    line-height: 26px;
}

.view-all {
    padding: 8px 0 12px;
    border-bottom: 1px solid #d5d9d9;
    text-align: center;
}

.warnings {
    display: flex;
    justify-content: space-between;
    padding: 13px 17px 14px;
}

/* Shipping performance */
.filter {
    display: flex;
    justify-content: flex-end;
    align-items: center;
    gap: 7px;
    padding: 14px 17px 5px 0;
    color: #565959;
}

.filter select {
    appearance: none;
    border: 0;
    padding: 0;
    background: none;
    color: inherit;
    font: inherit;
}

.filter svg {
    width: 6px;
    height: 4px;
    color: #777;
}

.rate {
    justify-content: space-between;
    height: 60px;
    margin-bottom: 4px;
}

.rate .target {
    line-height: 17px;
}

.eligibility {
    align-self: flex-end;
    margin: 1px 11px 0 0;
}

.next {
    height: 60px;
}

.next.second {
    grid-column-start: 2;
}

.feedback {
    position: absolute;
    left: 17px;
    bottom: 0;
    display: flex;
    align-items: center;
    gap: 4px;
    height: 18px;
    padding: 0 6px 0 9px;
    border-radius: 4px 4px 0 0;
    background-color: #008296;
    color: #fff;
    font-size: 8px;
    font-weight: 700;
}

.feedback svg {
    width: 7px;
    height: 7px;
}

.scrollbar {
    display: flex;
    flex-direction: column;
    align-items: center;
    width: 15px;
    border-left: 1px solid #e8e8e8;
    background-color: #fafafa;
}

.scrollbar::before {
    content: "";
    flex: 242;
}

.scrollbar::after {
    content: "";
    flex: 121;
}

.thumb {
    flex: 252;
    width: 8px;
    border-radius: 4px;
    background-color: #c1c1c1;
}

/* Dock */
.desktop {
    position: relative;
    z-index: 1;
    display: flex;
    justify-content: center;
    height: 45px;
    background: linear-gradient(#6d2025, #9b2e34 90%);
}

.dock {
    display: flex;
    padding: 0 3px;
    border-radius: 5px 5px 0 0;
    background-color: #cf5861;
    box-shadow: 0 0 40px rgba(0, 0, 0, 0.2);
}

.app {
    position: relative;
    width: 36px;
    padding: 5px 3px 0 2px;
}

.app svg {
    width: 31px;
    height: 31px;
}

.app.running::after {
    content: "";
    position: absolute;
    left: 16px;
    bottom: 2px;
    width: 4px;
    height: 4px;
    border-radius: 50%;
    background-color: #4d0409;
}

.app-badge {
    position: absolute;
    right: 0;
    top: 4px;
    width: 13px;
    height: 13px;
    border-radius: 50%;
    background-color: #ef3a3f;
    color: #fff;
    font-size: 8px;
    line-height: 13px;
    text-align: center;
}

.divider {
    width: 2px;
    height: 24px;
    margin: 11px 7px;
    background-color: #a93239;
}
```
